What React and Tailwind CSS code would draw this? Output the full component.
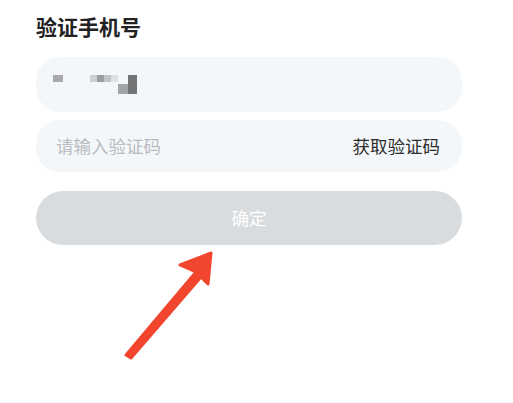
import React from 'react'

const font = { fontFamily: '"Noto Sans CJK SC", "Noto Sans", sans-serif' }

// blurred phone number
function Mosaic() {
  return (
    <div className="flex h-[19px] items-start">
      <span className="h-[7px] w-[10px] bg-[#a9a9ab]" />
      <div className="ml-[27px] flex">
        <span className="h-[7px] w-[7px] bg-[#cfd0d2]" />
        <span className="h-[7px] w-[7px] bg-[#9c9da0]" />
        <span className="h-[7px] w-[7px] bg-[#c3c4c6]" />
        <span className="h-[7px] w-[7px] bg-[#dfe0e2]" />
      </div>
      <span className="mt-[9px] h-[10px] w-[10px] bg-[#a3a4a6]" />
      <span className="h-[19px] w-[9px] bg-[#737476]" />
    </div>
  )
}

export default function App() {
  return (
    <div className="relative h-[403px] w-[513px] overflow-hidden bg-white" style={font}>
      <div className="flex flex-col pl-[36px] pr-[51px] pt-[10px]">
        <h1 className="text-[21px] font-bold leading-[32px] text-[#222]">验证手机号</h1>

        <div className="mt-[15px] flex h-[55px] items-center rounded-[24px] bg-[#f4f7fa] pl-[17px]">
          <Mosaic />
        </div>

        <div className="mt-[8px] flex h-[52px] items-center justify-between rounded-[24px] bg-[#f4f7fa] pl-[20px] pr-[22px]">
          <span className="text-[17.5px] text-[#b8bbbf]">请输入验证码</span>
          <span className="text-[17.5px] text-[#2d2d2d]">获取验证码</span>
        </div>

        <button className="mt-[19px] flex h-[54px] items-center justify-center rounded-full bg-[#d9dcde] text-[17.5px] text-white">
          确定
        </button>
      </div>

      <svg className="absolute left-0 top-0" width="513" height="403" viewBox="0 0 513 403">
        <path
          d="M126 355 L196 272 L180 265 L211 253 L208 284 L201 277 L131 358 Z"
          fill="#f2452e"
          stroke="#f2452e"
          strokeWidth="3"
          strokeLinejoin="round"
        />
      </svg>
    </div>
  )
}
